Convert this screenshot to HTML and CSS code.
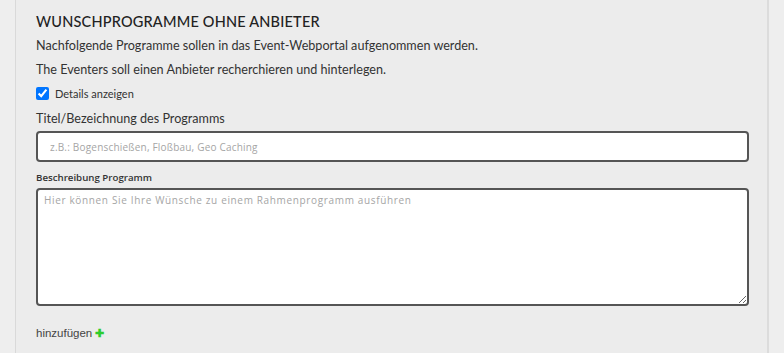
FILE: index.html
```html
<!DOCTYPE html>
<html>
<head>
  <title>Wunschprogramme</title>
  <link rel="stylesheet" href="styles.css">
</head>
<body>
  <div class="page">
    <div class="panel">
      <h2 class="title">WUNSCHPROGRAMME OHNE ANBIETER</h2>
      <p class="text">Nachfolgende Programme sollen in das Event-Webportal aufgenommen werden.</p>
      <p class="text">The Eventers soll einen Anbieter recherchieren und hinterlegen.</p>

      <label class="check">
        <input type="checkbox" checked>
        <span>Details anzeigen</span>
      </label>

      <label class="label-big" for="titel">Titel/Bezeichnung des Programms</label>
      <input type="text" id="titel" class="field" placeholder="z.B.: Bogenschießen, Floßbau, Geo Caching">

      <label class="label-small" for="beschr">Beschreibung Programm</label>
      <textarea id="beschr" class="area" placeholder="Hier können Sie Ihre Wünsche zu einem Rahmenprogramm ausführen"></textarea>

      <a class="add" href="#">hinzufügen <span class="plus">&#10010;</span></a>
    </div>
  </div>
</body>
</html>
```

FILE: styles.css
```css
body {
  margin: 0;
  background-color: #fff;
  font-family: Lato, "Open Sans", sans-serif;
}

.page {
  height: 353px;
  background-color: #eeeeee;
  padding: 0 15px 0 15px;
  overflow: hidden;
}

.panel {
  height: 353px;
  box-sizing: border-box;
  background-color: #ececec;
  border-left: 1px solid #d9d9d9;
  border-right: 2px solid #dcdcdc;
  padding: 12px 18px 0 20px;
  display: flex;
  flex-direction: column;
  align-items: flex-start;
}

.title {
  margin: 0 0 4px 0;
  font-size: 14.5px;
  font-weight: 500;
  letter-spacing: 0.2px;
  color: #222;
  line-height: 20px;
}

.text {
  margin: 0 0 4px 0;
  font-size: 12.6px;
  line-height: 20px;
  color: #333;
}

.check {
  display: flex;
  align-items: center;
  gap: 6px;
  margin-top: 3px;
  font-size: 11px;
  color: #333;
}

.check input {
  margin: 0;
  width: 13px;
  height: 13px;
}

.label-big {
  margin-top: 10px;
  font-size: 12.6px;
  color: #333;
  line-height: 18px;
}

.field {
  margin-top: 3px;
  width: 100%;
  height: 31px;
  box-sizing: border-box;
  border: 2px solid #555;
  border-radius: 4px;
  background: #fff;
  padding: 0 12px;
  font-family: "Open Sans", sans-serif;
  font-size: 10px;
  letter-spacing: 0.2px;
}

.field::placeholder,
.area::placeholder {
  color: #a5a5a5;
}

.label-small {
  margin-top: 9px;
  font-family: "Open Sans", sans-serif;
  font-size: 9.7px;
  font-weight: 600;
  color: #333;
  line-height: 14px;
}

.area {
  margin-top: 3px;
  width: 100%;
  height: 118px;
  box-sizing: border-box;
  border: 2px solid #555;
  border-radius: 4px;
  background: #fff;
  padding: 3px 6px;
  font-family: "Open Sans", sans-serif;
  font-size: 10px;
  letter-spacing: 0.65px;
  resize: vertical;
}

.add {
  margin-top: 21px;
  font-family: "Liberation Sans", Arial, sans-serif;
  font-size: 11.5px;
  color: #444;
  text-decoration: none;
}

.plus {
  color: #2ecc2e;
  font-size: 11px;
  font-weight: bold;
}
```
